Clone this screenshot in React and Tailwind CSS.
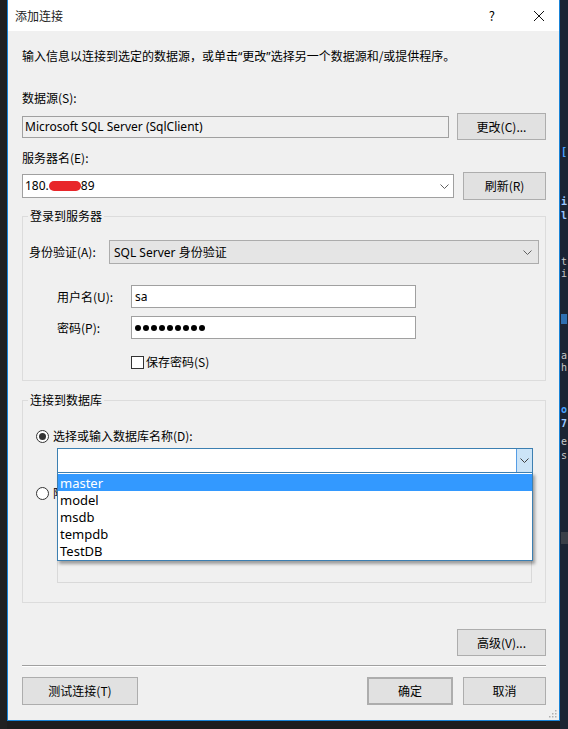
import React from "react";

const Chevron = ({ color = "#606060" }) => (
  <svg width="9" height="5" viewBox="0 0 9 5">
    <path d="M0.5 0.5 L4.5 4.5 L8.5 0.5" fill="none" stroke={color} strokeWidth="1" />
  </svg>
);

const Btn = ({ children, className = "" }) => (
  <button
    className={`flex items-center justify-center bg-[#e1e1e1] border border-[#adadad] text-[12px] leading-4 text-black ${className}`}
  >
    {children}
  </button>
);

const Radio = ({ checked }) => (
  <span className="flex h-[13px] w-[13px] items-center justify-center rounded-full border border-[#333] bg-white">
    {checked && <span className="h-[7px] w-[7px] rounded-full bg-[#333]" />}
  </span>
);

const dbs = ["master", "model", "msdb", "tempdb", "TestDB"];

export default function App() {
  return (
    <div className="flex h-[729px] w-[568px] bg-[#1c1c1e] font-['Noto_Sans_CJK_SC',sans-serif] text-[12px] text-black">
      <div className="h-full w-[7px] bg-[#202022]" />

      <div className="relative flex h-[721px] w-[553px] flex-col border-x border-b border-[#1883d7] bg-[#f0f0f0]">
        {/* title bar */}
        <div className="flex h-[31px] items-center bg-white pl-[7px] pr-[14px]">
          <span className="leading-4 text-[#222]">添加连接</span>
          <span className="ml-auto mr-[38px] text-[13px] leading-4">?</span>
          <svg width="12" height="12" viewBox="0 0 12 12">
            <path d="M1 1 L11 11 M11 1 L1 11" stroke="#111" strokeWidth="1" />
          </svg>
        </div>

        <div className="flex flex-1 flex-col pl-[14px] pr-[13px]">
          <p className="mt-[17px] h-4 overflow-visible leading-4">
            输入信息以连接到选定的数据源，或单击
            <span className="font-['Noto_Sans',sans-serif] leading-4">“</span>更改
            <span className="font-['Noto_Sans',sans-serif] leading-4">”</span>
            选择另一个数据源和/或提供程序。
          </p>

          <p className="mt-[26px] leading-4">数据源(S):</p>
          <div className="mt-[7px] flex h-[27px] items-center">
            <div className="flex h-[22px] w-[427px] items-center border border-[#a0a0a0] bg-[#f0f0f0] pl-[2px] font-['Noto_Sans',sans-serif] text-[12px]">
              Microsoft SQL Server (SqlClient)
            </div>
            <Btn className="ml-auto h-[27px] w-[89px]">更改(C)...</Btn>
          </div>

          <p className="mt-[10px] leading-4">服务器名(E):</p>
          <div className="mt-[6px] flex h-[28px] items-center">
            <div className="flex h-[24px] w-[432px] items-center border border-[#a0a0a0] bg-white pl-[2px] pr-[4px]">
              <span className="font-['Noto_Sans',sans-serif]">180.</span>
              <span className="h-[10px] w-[32px] rounded-full bg-[#e8262a]" />
              <span className="font-['Noto_Sans',sans-serif]">89</span>
              <span className="ml-auto">
                <Chevron />
              </span>
            </div>
            <Btn className="ml-auto h-[28px] w-[83px]">刷新(R)</Btn>
          </div>

          {/* login group */}
          <fieldset className="mt-[8px] border border-[#dcdcdc] pb-[11px]">
            <legend className="ml-[5px] px-[2px] leading-4">登录到服务器</legend>
            <div className="mt-[16px] flex h-[24px] items-center pl-[6px]">
              <span className="w-[80px] leading-4">身份验证(A):</span>
              <div className="flex h-[24px] w-[430px] items-center border border-[#acacac] bg-[#e5e5e5] pl-[4px] pr-[6px]">
                <span className="leading-4">
                  <span className="font-['Noto_Sans',sans-serif]">SQL Server </span>身份验证
                </span>
                <span className="ml-auto">
                  <Chevron />
                </span>
              </div>
            </div>

            <div className="mt-[21px] flex h-[23px] items-center pl-[34px]">
              <span className="w-[74px] leading-4">用户名(U):</span>
              <div className="flex h-[23px] w-[285px] items-center border border-[#a0a0a0] bg-white pl-[3px] font-['Noto_Sans',sans-serif]">
                sa
              </div>
            </div>
            <div className="mt-[8px] flex h-[23px] items-center pl-[34px]">
              <span className="w-[74px] leading-4">密码(P):</span>
              <div className="flex h-[23px] w-[285px] items-center gap-[2px] border border-[#a0a0a0] bg-white pl-[3px]">
                {Array.from({ length: 9 }).map((_, i) => (
                  <span key={i} className="h-[6px] w-[6px] rounded-full bg-black" />
                ))}
              </div>
            </div>
            <div className="mt-[16px] flex h-[14px] items-center pl-[108px]">
              <span className="h-[13px] w-[13px] border border-[#333] bg-white" />
              <span className="ml-[2px] leading-4">保存密码(S)</span>
            </div>
          </fieldset>

          {/* database group */}
          <fieldset className="mt-[11px] border border-[#dcdcdc] pb-[19px]">
            <legend className="ml-[5px] px-[2px] leading-4">连接到数据库</legend>
            <div className="mt-[20px] flex h-[16px] items-center pl-[13px]">
              <Radio checked />
              <span className="ml-[4px] leading-4">选择或输入数据库名称(D):</span>
            </div>
            <div className="relative ml-[34px] mt-[4px] w-[476px]">
              <div className="flex h-[25px] items-stretch border border-[#3c7fb1] bg-white">
                <span className="ml-auto flex w-[16px] items-center justify-center border-l border-[#569de5] bg-[#cce4f7]">
                  <Chevron color="#404040" />
                </span>
              </div>
              <div className="absolute left-0 top-[24px] z-10 w-[476px] border border-[#3c7fb1] bg-white py-px font-['Noto_Sans',sans-serif] text-[13px] shadow-[2px_3px_3px_rgba(0,0,0,0.35)]">
                {dbs.map((d, i) => (
                  <div
                    key={d}
                    className={`flex h-[17px] items-center pl-[2px] leading-4 ${
                      i === 0 ? "bg-[#3399ff] text-white" : "text-black"
                    }`}
                  >
                    {d}
                  </div>
                ))}
              </div>
            </div>
            <div className="mt-[12px] flex h-[16px] items-center pl-[13px]">
              <Radio />
              <span className="ml-[4px] leading-4">附</span>
            </div>
            <div className="ml-[34px] mt-[8px] h-[74px] w-[475px] border border-[#d9d9d9] bg-[#f0f0f0]" />
          </fieldset>

          <Btn className="ml-auto mt-[26px] h-[27px] w-[89px]">高级(V)...</Btn>

          <div className="mt-[9px] h-px bg-[#a0a0a0]" />
          <div className="h-px bg-white" />

          <div className="mt-[10px] flex h-[28px] items-center">
            <Btn className="h-[28px] w-[116px]">测试连接(T)</Btn>
            <Btn className="ml-auto h-[28px] w-[86px] border-2 border-[#0078d7]">确定</Btn>
            <Btn className="ml-[10px] h-[28px] w-[83px]">取消</Btn>
          </div>
        </div>

        <svg className="absolute bottom-[2px] right-[2px]" width="9" height="9" viewBox="0 0 9 9">
          {[
            [7, 1],
            [4, 4],
            [7, 4],
            [1, 7],
            [4, 7],
            [7, 7],
          ].map(([x, y]) => (
            <rect key={`${x}-${y}`} x={x} y={y} width="1.5" height="1.5" fill="#b0b0b0" />
          ))}
        </svg>
      </div>

      <div className="flex h-full w-[8px] flex-col overflow-hidden bg-[#1b2433] pl-[1px] font-['DejaVu_Sans_Mono',monospace] text-[10px] leading-3">
        <span className="mt-[146px] font-bold text-[#4aa3ff]">[</span>
        <span className="mt-[38px] font-bold text-[#9cc8ff]">i</span>
        <span className="mt-[2px] font-bold text-[#9cc8ff]">l</span>
        <span className="mt-[34px] text-[#c8c8c8]">t</span>
        <span className="text-[#c8c8c8]">i</span>
        <span className="mt-[34px] h-[10px] w-[6px] bg-[#2f6fb0]" />
        <span className="mt-[26px] text-[#c8c8c8]">a</span>
        <span className="text-[#c8c8c8]">h</span>
        <span className="mt-[30px] font-bold text-[#4aa3ff]">o</span>
        <span className="mt-[2px] font-bold text-[#9cc8ff]">7</span>
        <span className="mt-[6px] text-[#c8c8c8]">e</span>
        <span className="mt-[2px] text-[#c8c8c8]">s</span>
        <span className="mt-[70px] h-[12px] w-full bg-[#3a3f47]" />
      </div>
    </div>
  );
}
